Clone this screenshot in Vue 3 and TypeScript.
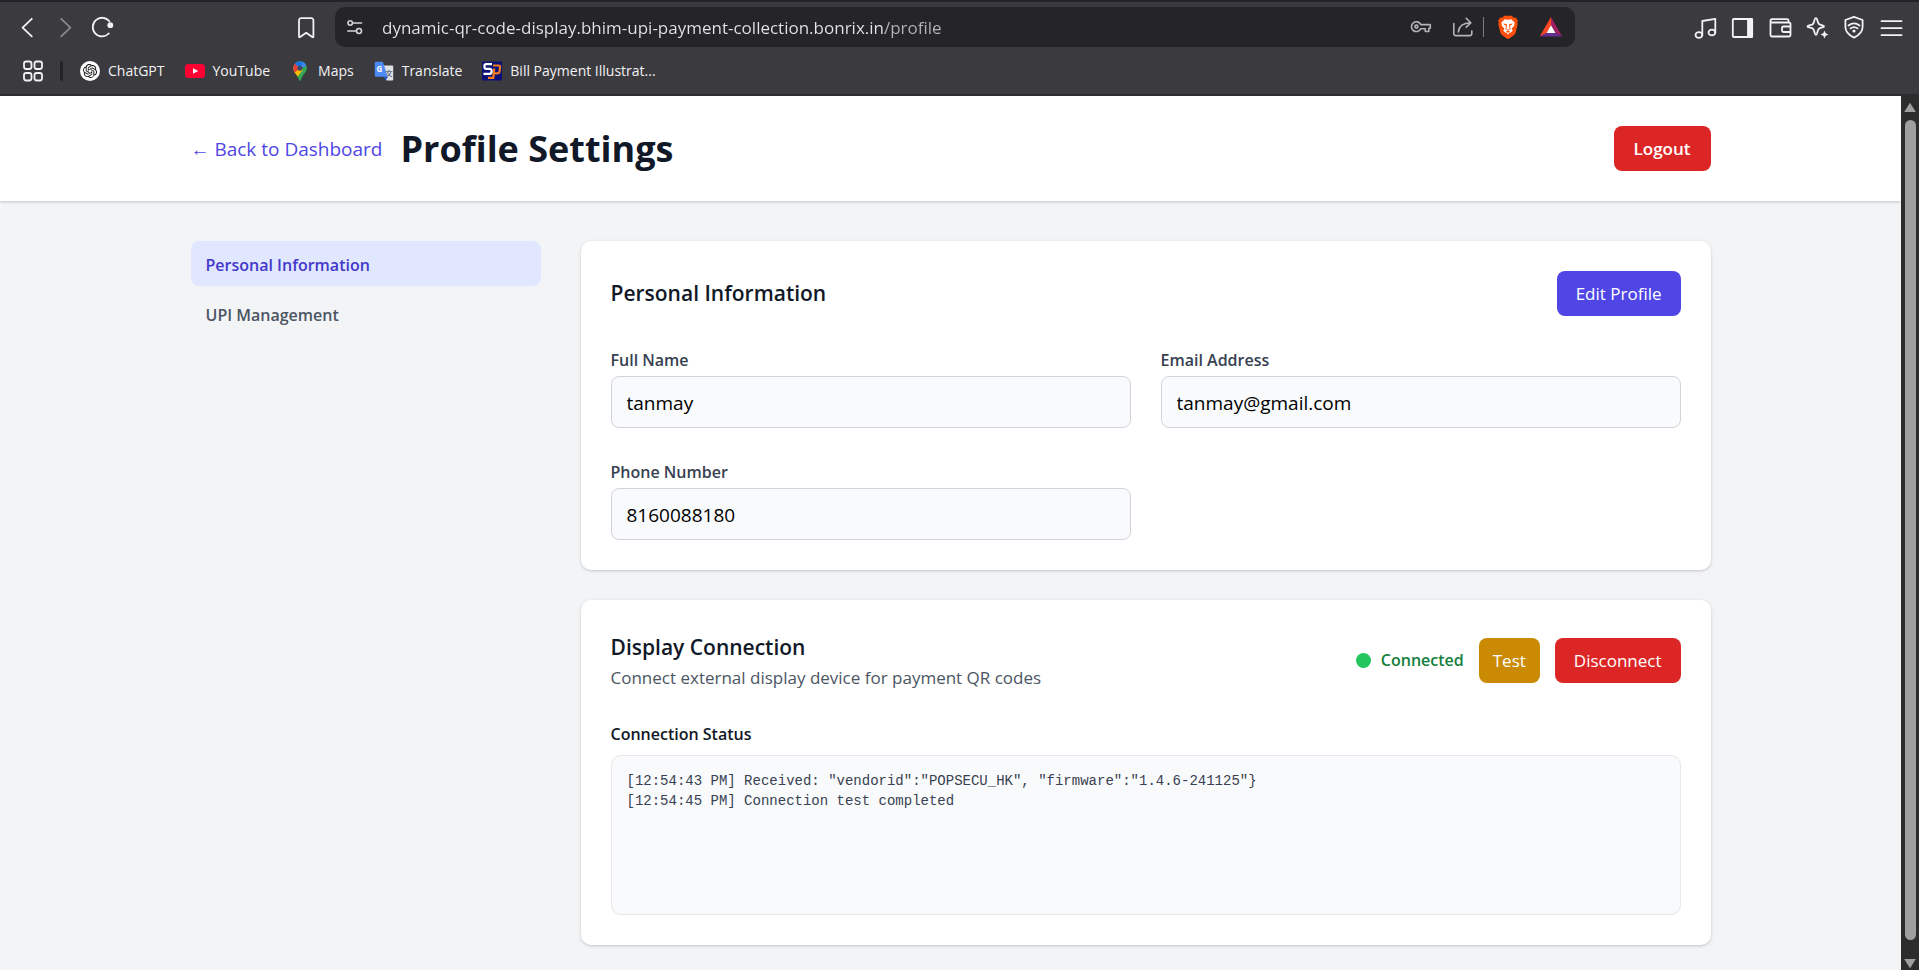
<script setup lang="ts">
import { ref } from 'vue'

interface Field {
  id: string
  label: string
  type: string
  value: string
}

interface Section {
  id: string
  label: string
}

const address = ref('dynamic-qr-code-display.bhim-upi-payment-collection.bonrix.in/profile')

const sections: Section[] = [
  { id: 'personal', label: 'Personal Information' },
  { id: 'upi', label: 'UPI Management' },
]
const activeSection = ref('personal')

const fields = ref<Field[]>([
  { id: 'full-name', label: 'Full Name', type: 'text', value: 'tanmay' },
  { id: 'email', label: 'Email Address', type: 'email', value: 'tanmay@gmail.com' },
  { id: 'phone', label: 'Phone Number', type: 'tel', value: '8160088180' },
])
const editing = ref(false)

const log = ref<string[]>([
  '[12:54:43 PM] Received: "vendorid":"POPSECU_HK", "firmware":"1.4.6-241125"}',
  '[12:54:45 PM] Connection test completed',
])
</script>

<template>
  <div class="browser">
    <header class="chrome">
      <div class="toolbar">
        <div class="tool-group nav-tools">
          <button class="tool" type="button" aria-label="Back">
            <svg class="line" width="24" height="24" viewBox="0 0 24 24"><path d="M16.8 3.8 7.6 12.6l9.2 8.8" /></svg>
          </button>
          <button class="tool dim" type="button" aria-label="Forward">
            <svg class="line" width="24" height="24" viewBox="0 0 24 24"><path d="M8.2 3.8l9.2 8.8-9.2 8.8" /></svg>
          </button>
          <button class="tool" type="button" aria-label="Reload">
            <svg class="line" width="24" height="24" viewBox="0 0 24 24">
              <path d="M18.3 6.2A9.3 9.3 0 1 0 17.8 18.5" />
              <circle class="fill" cx="19.3" cy="10.2" r="2.9" />
            </svg>
          </button>
        </div>
        <button class="tool" type="button" aria-label="Bookmark this page">
          <svg class="line" width="24" height="24" viewBox="0 0 24 24">
            <path d="M7 3.2h10.4a2 2 0 0 1 2 2v16.2q0 1.4-1.1.6L12.2 17.7 6.1 22q-1.1.8-1.1-.6V5.2a2 2 0 0 1 2-2z" />
          </svg>
        </button>
        <div class="address-bar">
          <svg class="line thin" width="18" height="18" viewBox="0 0 18 18">
            <circle cx="4.2" cy="5" r="2.2" />
            <path d="M6.8 5H15.5M1.8 13h8.4" />
            <circle cx="13" cy="13" r="2.5" />
          </svg>
          <input v-model="address" class="address" type="text" aria-label="Address" spellcheck="false" />
          <button class="bar-tool" type="button" aria-label="Passwords">
            <svg class="line thin grey" width="22" height="22" viewBox="0 0 22 22">
              <path d="M10.8 8.6H20.3V12.3H18.8V15.5H15.3V12.7H10.8A4.9 4.9 0 1 1 10.8 8.6Z" />
              <circle cx="6.4" cy="10.6" r="1.5" />
            </svg>
          </button>
          <button class="bar-tool share" type="button" aria-label="Share">
            <svg class="line thin grey" width="22" height="22" viewBox="0 0 22 22">
              <path d="M1.8 7.5V17.6a2 2 0 0 0 2 2H17.8a2 2 0 0 0 2-2V15M6.3 16C6.8 10.5 10 7.2 18.5 6.8M14.2 2.2 18.8 6.8 14.2 11.2" />
            </svg>
          </button>
          <span class="bar-rule"></span>
          <button class="bar-tool" type="button" aria-label="Shields">
            <svg width="22" height="24" viewBox="0 0 22 24">
              <path fill="#fb4f0a" d="M7.2.8h7.6l1.8 2 2-.4 2.3 3-.7 2 .5 1.600-2 8.600q-.4 1.500-1.600 2.400L12.300 23.500q-1.300.8-2.600 0L4.900 20q-1.200-.9-1.600-2.400L1.300 9l.5-1.600-.7-2 2.300-3 2 .4z" />
              <path fill="#fff" d="M11 4.800l3.200-.6 3.600 3.600-.6 1.200.3 1.300-2.700 3.200.2 1.400 1 .7-2.600 2.100-1-.2L11 19.800l-1.400-2.300-1 .2L6 15.600l1-.7.2-1.400-2.700-3.200.3-1.300-.6-1.200 3.600-3.600z" />
              <path fill="#fb4f0a" d="M6 8.600l3.400.5.6 1-.6 3.300.9 1h1.400l.9-1-.6-3.300.6-1 3.400-.5-2 1.700-1.100.2.7 3.500-2.600 1.500-2.600-1.500.7-3.500-1.100-.2zM9 16.500l2-.9 2 .9-2 1.200z" />
            </svg>
          </button>
          <button class="bar-tool rewards" type="button" aria-label="Rewards">
            <svg width="24" height="22" viewBox="0 0 24 22">
              <path fill="#ff4724" d="M12 1v8.300L7.500 17 .7 20.600z" />
              <path fill="#9e1f63" d="M12 1l11.300 19.600L16.500 17 12 9.300z" />
              <path fill="#662d91" d="M.7 20.600L7.500 17h9l6.800 3.600z" />
              <path fill="#fff" d="M12 9.300l4.500 7.700h-9z" />
            </svg>
          </button>
        </div>
        <div class="tool-group side-tools">
          <button class="tool" type="button" aria-label="Playlist">
            <svg class="line" width="24" height="24" viewBox="0 0 24 24">
              <ellipse cx="4.9" cy="20" rx="3.4" ry="2.9" /><ellipse cx="17.9" cy="17.5" rx="3.4" ry="2.9" />
              <path d="M8.300 20V6L21.300 3.800V17.500" />
            </svg>
          </button>
          <button class="tool" type="button" aria-label="Sidebar">
            <svg class="line" width="24" height="24" viewBox="0 0 24 24">
              <rect x="1.800" y="4" width="19.400" height="18" rx="1" /><path class="solid" d="M17 4H21V22H17z" />
            </svg>
          </button>
          <button class="tool" type="button" aria-label="Wallet">
            <svg class="line" width="24" height="24" viewBox="0 0 24 24">
              <path d="M2.500 6V20a1.500 1.500 0 0 0 1.500 1.500H21a1.500 1.500 0 0 0 1.500-1.500V9A1.500 1.500 0 0 0 21 7.500H3.500Q2.500 7.500 2.500 6 2.500 4.200 4 4.200H19Q20.500 4.200 20.500 6V7.500M22.500 11.500H15.500a1.500 1.500 0 0 0-1.500 1.500V15.500a1.500 1.500 0 0 0 1.500 1.500H22.500" />
            </svg>
          </button>
          <button class="tool" type="button" aria-label="Assistant">
            <svg class="line" width="24" height="24" viewBox="0 0 24 24">
              <path d="M10.800 3.200Q11.800 3.200 12.300 5L13 7.600Q13.400 9.100 15 9.600L18 10.600Q20 11.400 18 12.200L15 13.200Q13.500 13.700 13 15.200L12 18.500Q11 21.300 9.900 18.500L8.900 15.200Q8.400 13.700 7 13.200L3.500 12.200Q1.500 11.400 3.500 10.600L7 9.600Q8.400 9.100 8.800 7.600L9.500 5Q9.900 3.200 10.800 3.200Z" />
              <path class="fill" d="M19.500 15.500L20.700 18.300 23.500 19.500 20.700 20.700 19.500 23.500 18.300 20.700 15.500 19.500 18.300 18.300Z" />
            </svg>
          </button>
          <button class="tool" type="button" aria-label="VPN">
            <svg class="line" width="24" height="24" viewBox="0 0 24 24">
              <path d="M12 1.800 20.600 5V12Q20.600 18.500 12 22.600 3.400 18.500 3.400 12V5Z" />
              <path d="M6.500 10.500Q12 6.200 17.500 10.500M8.500 13.400Q12 10.700 15.500 13.400" />
              <circle class="fill" cx="12" cy="16" r="1.600" />
            </svg>
          </button>
          <button class="tool" type="button" aria-label="Menu">
            <svg class="line" width="24" height="24" viewBox="0 0 24 24"><path d="M2.500 6.200H22.500M2.500 13.200H22.500M2.500 20.200H22.500" /></svg>
          </button>
        </div>
      </div>

      <nav class="bookmarks" aria-label="Bookmarks">
        <button class="apps" type="button" aria-label="Apps">
          <svg class="line" width="22" height="22" viewBox="0 0 22 22">
            <rect x="2" y="1.500" width="7.500" height="7.500" rx="2.200" /><rect x="12.500" y="1.500" width="7.500" height="7.500" rx="2.200" />
            <rect x="2" y="13" width="7.500" height="7.500" rx="2.200" /><rect x="12.500" y="13" width="7.500" height="7.500" rx="2.200" />
          </svg>
        </button>
        <span class="bookmark-rule"></span>
        <a class="bookmark" href="#chatgpt">
          <svg width="20" height="20" viewBox="0 0 20 20">
            <circle cx="10" cy="10" r="10" fill="#fff" />
            <g transform="translate(3 3) scale(.585)">
              <path fill="#111" d="M22.2819 9.8211a5.9847 5.9847 0 0 0-.5157-4.9108 6.0462 6.0462 0 0 0-6.5098-2.9A6.0651 6.0651 0 0 0 4.9807 4.1818a5.9847 5.9847 0 0 0-3.9977 2.9 6.0462 6.0462 0 0 0 .7427 7.0966 5.98 5.98 0 0 0 .511 4.9107 6.051 6.051 0 0 0 6.5146 2.9001A5.9847 5.9847 0 0 0 13.2599 24a6.0557 6.0557 0 0 0 5.7718-4.2058 5.9894 5.9894 0 0 0 3.9977-2.9001 6.0557 6.0557 0 0 0-.7475-7.0729zm-9.022 12.6081a4.4755 4.4755 0 0 1-2.8764-1.0408l.1419-.0804 4.7783-2.7582a.7948.7948 0 0 0 .3927-.6813v-6.7369l2.02 1.1686a.071.071 0 0 1 .038.052v5.5826a4.504 4.504 0 0 1-4.4945 4.4944zm-9.6607-4.1254a4.4708 4.4708 0 0 1-.5346-3.0137l.142.0852 4.783 2.7582a.7712.7712 0 0 0 .7806 0l5.8428-3.3685v2.3324a.0804.0804 0 0 1-.0332.0615L9.74 19.9502a4.4992 4.4992 0 0 1-6.1408-1.6464zM2.3408 7.8956a4.485 4.485 0 0 1 2.3655-1.9728V11.6a.7664.7664 0 0 0 .3879.6765l5.8144 3.3543-2.0201 1.1685a.0757.0757 0 0 1-.071 0l-4.8303-2.7865A4.504 4.504 0 0 1 2.3408 7.872zm16.5963 3.8558L13.1038 8.364 15.1192 7.2a.0757.0757 0 0 1 .071 0l4.8303 2.7913a4.4944 4.4944 0 0 1-.6765 8.1042v-5.6772a.79.79 0 0 0-.407-.667zm2.0107-3.0231l-.142-.0852-4.7735-2.7818a.7759.7759 0 0 0-.7854 0L9.409 9.2297V6.8974a.0662.0662 0 0 1 .0284-.0615l4.8303-2.7866a4.4992 4.4992 0 0 1 6.6802 4.66zM8.3065 12.863l-2.02-1.1638a.0804.0804 0 0 1-.038-.0567V6.0742a4.4992 4.4992 0 0 1 7.3757-3.4537l-.142.0805L8.704 5.459a.7948.7948 0 0 0-.3927.6813zm1.0976-2.3654l2.602-1.4998 2.6069 1.4998v2.9994l-2.5974 1.4997-2.6067-1.4997Z" />
            </g>
          </svg>
          ChatGPT
        </a>
        <a class="bookmark" href="#youtube">
          <svg width="20" height="20" viewBox="0 0 20 20">
            <rect y="3" width="20" height="14" rx="3.500" fill="#ff0033" /><path fill="#fff" d="M8 7.200 13.200 10 8 12.800z" />
          </svg>
          YouTube
        </a>
        <a class="bookmark" href="#maps">
          <svg width="20" height="20" viewBox="0 0 20 20">
            <clipPath id="pin"><path d="M10 .3a6.900 6.900 0 0 1 6.900 6.900c0 4.300-4.500 6-5.800 11.300q-.3 1.200-1.100 1.200t-1.100-1.200C7.600 13.200 3.100 11.500 3.100 7.200A6.900 6.900 0 0 1 10 .3z" /></clipPath>
            <g clip-path="url(#pin)">
              <path fill="#34a853" d="M0 0h20v20H0z" />
              <path fill="#fbbc04" d="M0 14.500 8 5.200 13 8.800 6.500 17z" />
              <path fill="#ea4335" d="M0 0h5L10 7.200 3.600 12.500H0z" />
              <path fill="#1a73e8" d="M4.500 2.500 10 7.200 14 0H4z" />
              <path fill="#4285f4" d="M10 7.200 13.500 0H20V4z" />
            </g>
            <circle cx="10" cy="7.200" r="2.500" fill="#3c4a63" />
          </svg>
          Maps
        </a>
        <a class="bookmark" href="#translate">
          <svg width="20" height="20" viewBox="0 0 20 20">
            <path fill="#dfe1e5" d="M8 4.500H18.200a1 1 0 0 1 1 1V18.500a1 1 0 0 1-1 1H12.500z" />
            <path fill="#1a56d6" d="M9.500 15.800H14L11.800 19.300z" />
            <path fill="#4c8bf5" d="M1.800.8H8.800L13.800 15.800H1.800a1 1 0 0 1-1-1V1.800a1 1 0 0 1 1-1z" />
            <text x="2.500" y="11" class="mark-g">G</text>
            <text x="11.500" y="15" class="mark-zh">文</text>
          </svg>
          Translate
        </a>
        <a class="bookmark" href="#bill-payment">
          <svg width="20" height="20" viewBox="0 0 20 20">
            <path fill="#0c1273" d="M0 .5H20V19.500H0z" />
            <path fill="none" stroke="#f47b20" stroke-width="2.200" d="M11 4.500H16.500Q18.300 4.500 18 6.500L17.500 10.500Q17.200 12.300 15.500 12.300H11.800M12.200 7.500 11.300 16.800H6" />
            <path fill="none" stroke="#fff" stroke-width="2.200" d="M10 3.200H4.200Q2.400 3.200 2.400 5.400T4.200 7.800H7.800Q9.600 7.800 9.600 10.300T7.800 12.800H1.500" />
          </svg>
          Bill Payment Illustrat...
        </a>
      </nav>
    </header>

    <div class="viewport">
      <div class="page">
        <header class="page-header">
          <div class="container header-row">
            <div class="heading">
              <a class="back" href="#dashboard">← Back to Dashboard</a>
              <h1>Profile Settings</h1>
            </div>
            <button class="btn red strong" type="button">Logout</button>
          </div>
        </header>

        <main class="container layout">
          <nav class="sections" aria-label="Settings sections">
            <button
              v-for="section in sections"
              :key="section.id"
              type="button"
              class="section"
              :class="{ active: section.id === activeSection }"
              @click="activeSection = section.id"
            >
              {{ section.label }}
            </button>
          </nav>

          <div class="cards">
            <section class="card">
              <div class="card-head">
                <h2>Personal Information</h2>
                <button class="btn indigo" type="button" @click="editing = !editing">Edit Profile</button>
              </div>
              <form class="fields" @submit.prevent>
                <div v-for="field in fields" :key="field.id" class="field">
                  <label :for="field.id">{{ field.label }}</label>
                  <input :id="field.id" v-model="field.value" :type="field.type" :readonly="!editing" />
                </div>
              </form>
            </section>

            <section class="card">
              <div class="card-head">
                <div>
                  <h2>Display Connection</h2>
                  <p class="hint">Connect external display device for payment QR codes</p>
                </div>
                <div class="actions">
                  <span class="state"><span class="dot"></span>Connected</span>
                  <button class="btn amber" type="button">Test</button>
                  <button class="btn red" type="button">Disconnect</button>
                </div>
              </div>
              <h3>Connection Status</h3>
              <div class="log" role="log">
                <div v-for="line in log" :key="line">{{ line }}</div>
              </div>
            </section>
          </div>
        </main>
      </div>

      <div class="scrollbar" aria-hidden="true">
        <svg width="14" height="11" viewBox="0 0 14 11"><path d="M7 .8 12.800 10H1.200z" /></svg>
        <span class="thumb"></span>
        <svg width="14" height="11" viewBox="0 0 14 11"><path d="M1.200 1H12.800L7 10.200z" /></svg>
      </div>
    </div>
  </div>
</template>

<style>
body {
  margin: 0;
}
</style>

<style scoped>
.browser {
  display: flex;
  flex-direction: column;
  height: 100vh;
  overflow: hidden;
  font-family: "Open Sans", "Noto Sans", sans-serif;
  color: #111827;
}

.browser *,
.browser *::before {
  box-sizing: border-box;
}

button,
input {
  margin: 0;
  font: inherit;
}

button {
  padding: 0;
  border: 0;
  background: none;
  color: inherit;
  cursor: pointer;
}

h1,
h2,
h3,
p {
  margin: 0;
}

svg {
  display: block;
  flex: none;
}

/* Browser chrome */
.chrome {
  flex: none;
  border-top: 2px solid #232228;
  border-bottom: 2px solid #2d2a30;
  background: #3b3a3f;
  color: #f2f2f4;
}

.toolbar {
  display: flex;
  align-items: center;
  padding: 5px 10px 0 8px;
}

.tool-group {
  display: flex;
}

.nav-tools {
  margin-right: 165px;
}

.side-tools {
  margin-left: 112px;
}

.tool {
  display: flex;
  align-items: center;
  justify-content: center;
  width: 38px;
  height: 40px;
}

.side-tools .tool {
  width: 37px;
}

.dim {
  color: #8a898e;
}

.line {
  fill: none;
  stroke: currentColor;
  stroke-width: 1.8;
  stroke-linecap: round;
  stroke-linejoin: round;
}

.line.thin {
  stroke-width: 1.6;
}

.grey {
  color: #b4b3b8;
}

.line .solid {
  fill: currentColor;
}

.line .fill {
  fill: currentColor;
  stroke: none;
}

.address-bar {
  display: flex;
  flex: 1;
  align-items: center;
  min-width: 0;
  height: 40px;
  margin-left: 10px;
  padding: 0 12px 0 11px;
  border-radius: 10px;
  background: #252429;
  color: #d5d4d9;
}

/* The host part of the address is brighter than its path. */
.address {
  flex: 1;
  min-width: 0;
  height: 40px;
  margin-left: 18px;
  padding: 0;
  border: 0;
  outline: 0;
  background: linear-gradient(90deg, #e6e5ea 503px, #b4b3b8 503px);
  background-clip: text;
  color: transparent;
  font-size: 17px;
}

.bar-tool.share {
  margin-left: 20px;
}

.bar-rule {
  width: 1px;
  height: 20px;
  margin: 0 13px 0 9px;
  background: #7d7c82;
}

.bar-tool.rewards {
  margin-left: 20px;
}

.bookmarks {
  display: flex;
  align-items: center;
  gap: 20px;
  height: 47px;
  padding: 0 22px;
  font-size: 14px;
}

.bookmark-rule {
  width: 3px;
  height: 20px;
  margin: 0 -3px 0 -4px;
  border-radius: 2px;
  background: #242328;
}

.bookmark {
  display: flex;
  align-items: center;
  gap: 8px;
  color: inherit;
  text-decoration: none;
  white-space: nowrap;
}

.mark-g {
  fill: #fff;
  font: 700 8px "Open Sans", sans-serif;
}

.mark-zh {
  fill: #5f6b7a;
  font: 700 7px "Noto Sans CJK SC", sans-serif;
}

/* Page */
.viewport {
  display: flex;
  flex: 1;
  min-height: 0;
}

.page {
  flex: 1;
  min-width: 0;
  overflow: hidden;
  background: #f3f4f6;
}

.container {
  max-width: 1600px;
  margin: 0 auto;
  padding: 0 40px;
}

.page-header {
  padding: 30px 0;
  background: #fff;
  box-shadow: 0 1px 4px rgba(0, 0, 0, 0.1), 0 1px 2px rgba(0, 0, 0, 0.1);
}

.header-row,
.heading,
.card-head,
.actions,
.state {
  display: flex;
  align-items: center;
}

.header-row,
.card-head {
  justify-content: space-between;
}

.heading {
  gap: 18px;
}

.back {
  color: #4f46e5;
  font-size: 19px;
  text-decoration: none;
}

h1 {
  font-size: 36px;
  font-weight: 700;
  line-height: 45px;
}

.btn {
  height: 45px;
  padding: 0 19px;
  border-radius: 8px;
  color: #fff;
  font-size: 17px;
}

.btn.strong {
  padding: 0 20px;
  font-weight: 600;
}

.red {
  background: #dc2626;
}

.indigo {
  background: #4f46e5;
}

.btn.amber {
  padding: 0 14px;
  background: #ca8a04;
}

.layout {
  display: grid;
  grid-template-columns: repeat(4, minmax(0, 1fr));
  gap: 40px;
  padding-top: 40px;
}

.sections {
  display: flex;
  flex-direction: column;
  gap: 5px;
}

.section {
  height: 45px;
  padding: 2px 15px 0;
  border-radius: 8px;
  color: #4b5563;
  font-size: 16px;
  font-weight: 600;
  text-align: left;
}

.section.active {
  background: #e0e7ff;
  color: #4338ca;
}

.cards {
  display: flex;
  flex-direction: column;
  grid-column: span 3;
  gap: 30px;
}

.card {
  padding: 30px;
  border-radius: 10px;
  background: #fff;
  box-shadow: 0 1px 4px rgba(0, 0, 0, 0.1), 0 1px 2px rgba(0, 0, 0, 0.1);
}

.card-head {
  margin-bottom: 30px;
}

h2 {
  font-size: 21px;
  font-weight: 600;
  line-height: 35px;
}

.fields {
  display: grid;
  grid-template-columns: repeat(2, minmax(0, 1fr));
  gap: 30px;
}

.field label {
  display: block;
  margin-bottom: 2px;
  color: #374151;
  font-size: 16px;
  font-weight: 600;
  line-height: 28px;
}

.field input {
  display: block;
  width: 100%;
  height: 52px;
  padding: 1px 15px 0;
  border: 1px solid #d1d5db;
  border-radius: 8px;
  background: #f9fafb;
  color: #000;
  font-size: 19px;
}

.hint {
  color: #4b5563;
  font-size: 17px;
  line-height: 25px;
}

.actions {
  gap: 15px;
}

.state {
  gap: 10px;
  color: #15803d;
  font-size: 16px;
  font-weight: 600;
}

.dot {
  width: 15px;
  height: 15px;
  border-radius: 50%;
  background: #22c55e;
}

h3 {
  margin-bottom: 7px;
  font-size: 16px;
  font-weight: 600;
  line-height: 28px;
}

.log {
  height: 160px;
  padding: 15px;
  overflow: auto;
  border: 1px solid #e5e7eb;
  border-radius: 10px;
  background: #f9fafb;
  color: #374151;
  font-family: "Liberation Mono", monospace;
  font-size: 14px;
  line-height: 20px;
}

.scrollbar {
  display: flex;
  flex: none;
  flex-direction: column;
  align-items: center;
  gap: 7px;
  width: 18px;
  padding: 6px 0 1px;
  background: #2c2c2c;
  fill: #9f9f9f;
}

.scrollbar svg:last-child {
  margin-top: 11px;
}

.thumb {
  flex: 1;
  width: 11px;
  border-radius: 6px;
  background: #9f9f9f;
}
</style>
